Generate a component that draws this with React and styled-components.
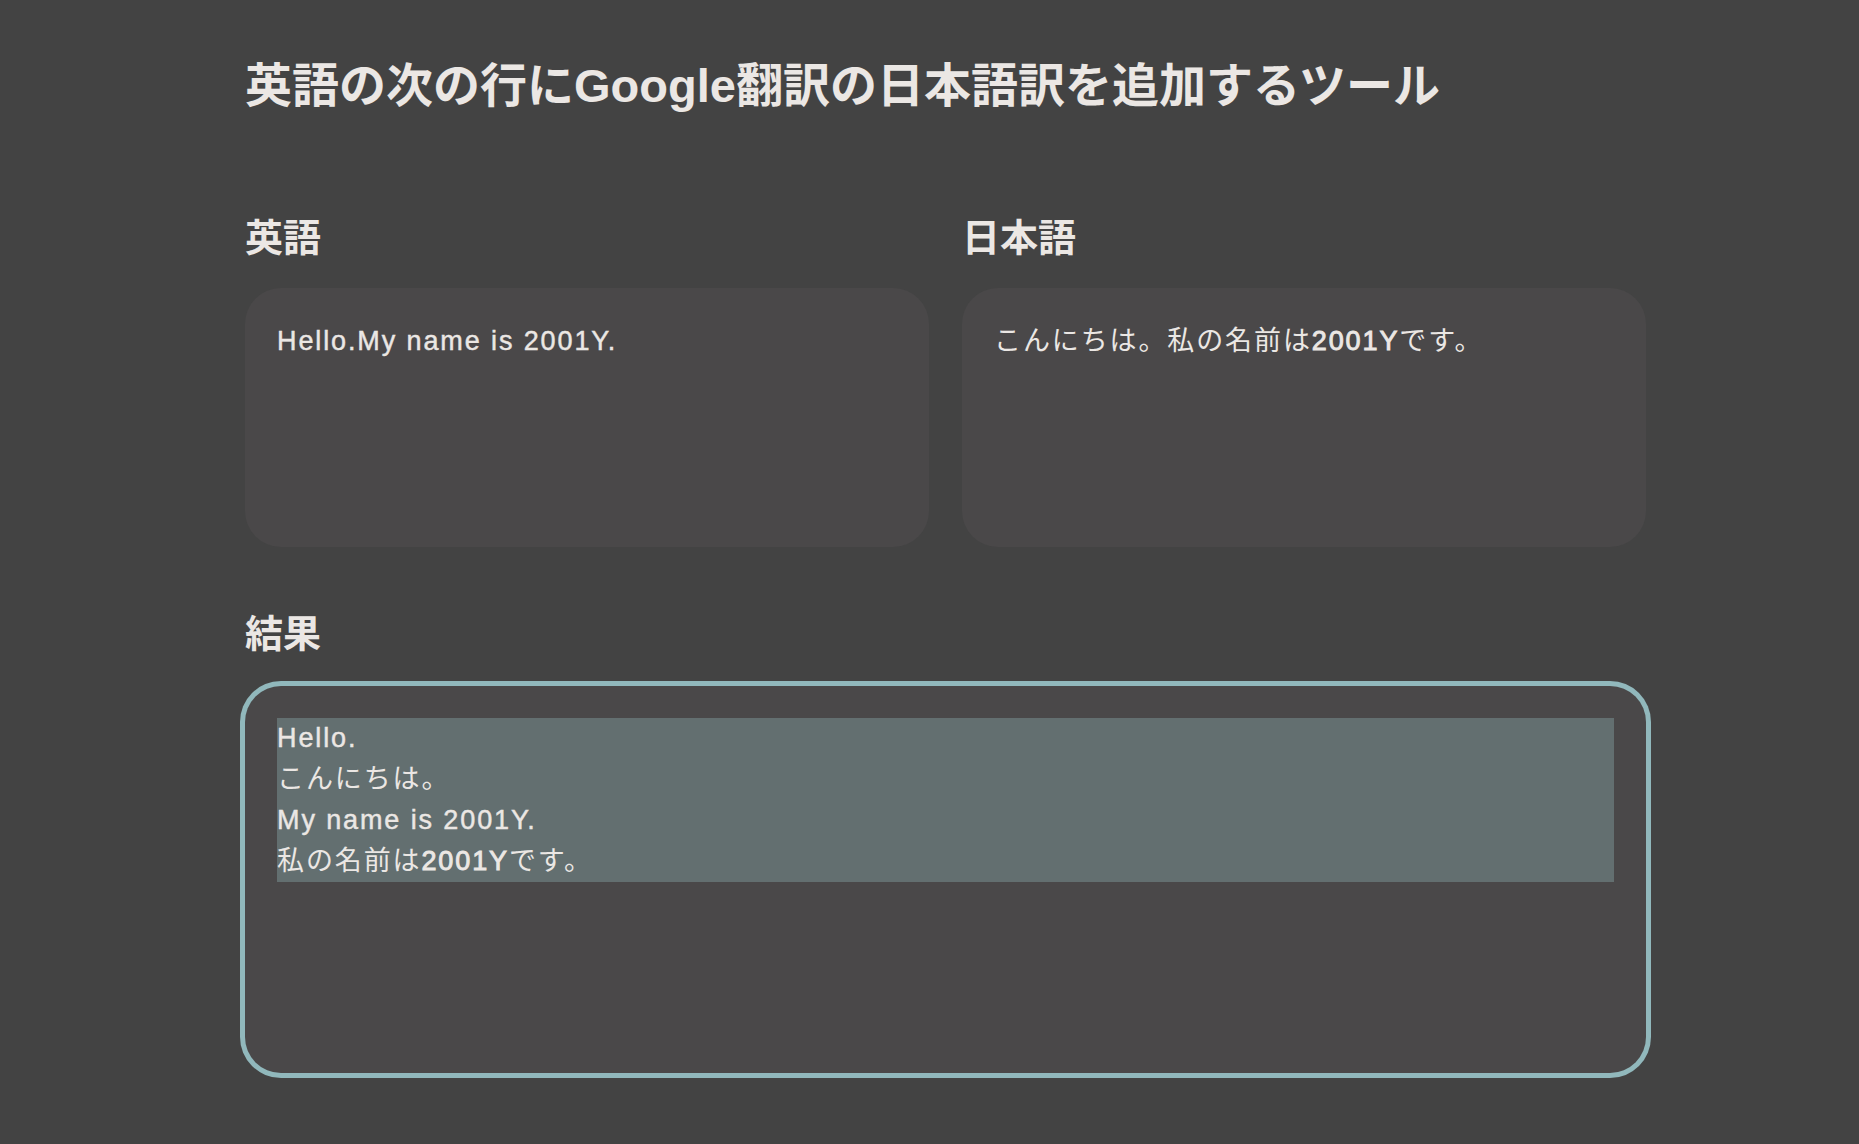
import React from "react";
import styled, { createGlobalStyle } from "styled-components";

const GlobalStyle = createGlobalStyle`
  html, body {
    margin: 0;
    padding: 0;
    background: #434343;
  }
  body {
    font-family: "Liberation Sans", "Noto Sans CJK JP", sans-serif;
    color: #ebe7e4;
  }
`;

const Page = styled.main`
  box-sizing: border-box;
  width: 1401px;
  margin-left: 245px;
  padding-top: 58px;
  padding-bottom: 60px;
`;

const Title = styled.h1`
  margin: 0 0 101px;
  font-size: 47px;
  line-height: 56px;
  font-weight: 700;
  letter-spacing: 0;
  white-space: nowrap;
`;

const Columns = styled.div`
  display: grid;
  grid-template-columns: 1fr 1fr;
  column-gap: 33px;
`;

const Section = styled.section`
  display: flex;
  flex-direction: column;
  margin-top: ${(p) => p.$top || 0}px;
`;

const Label = styled.h2`
  margin: 0 0 ${(p) => p.$gap || 27}px;
  font-size: 38px;
  line-height: 46px;
  font-weight: 700;
`;

const Box = styled.div`
  box-sizing: border-box;
  height: ${(p) => p.$height}px;
  padding: ${(p) => p.$padTop || 32}px 32px 32px;
  border-radius: 36px;
  background: #4a4849;
  font-size: 27px;
  line-height: 41px;
  letter-spacing: 0.07em;
  color: #ebe7e4;
  box-shadow: ${(p) => (p.$focused ? "0 0 0 5px #91b8bc" : "none")};
`;

const Selection = styled.div`
  background: #636f70;
`;

const Line = styled.div`
  white-space: nowrap;
`;

const Latin = styled.span`
  -webkit-text-stroke: ${(p) => (p.$strong ? "0.9px" : "0.45px")} currentColor;
`;

export default function App() {
  return (
    <>
      <GlobalStyle />
      <Page>
        <Title>英語の次の行にGoogle翻訳の日本語訳を追加するツール</Title>
        <Columns>
          <Section>
            <Label>英語</Label>
            <Box $height={259} $padTop={33}>
              <Latin>Hello.My name is 2001Y.</Latin>
            </Box>
          </Section>
          <Section>
            <Label>日本語</Label>
            <Box $height={259} $padTop={33}>
              こんにちは。私の名前は<Latin $strong>2001Y</Latin>です。
            </Box>
          </Section>
        </Columns>
        <Section $top={64}>
          <Label $gap={29}>結果</Label>
          <Box $height={387} $focused>
            <Selection>
              <Line>
                <Latin>Hello.</Latin>
              </Line>
              <Line>こんにちは。</Line>
              <Line>
                <Latin>My name is 2001Y.</Latin>
              </Line>
              <Line>
                私の名前は<Latin $strong>2001Y</Latin>です。
              </Line>
            </Selection>
          </Box>
        </Section>
      </Page>
    </>
  );
}
